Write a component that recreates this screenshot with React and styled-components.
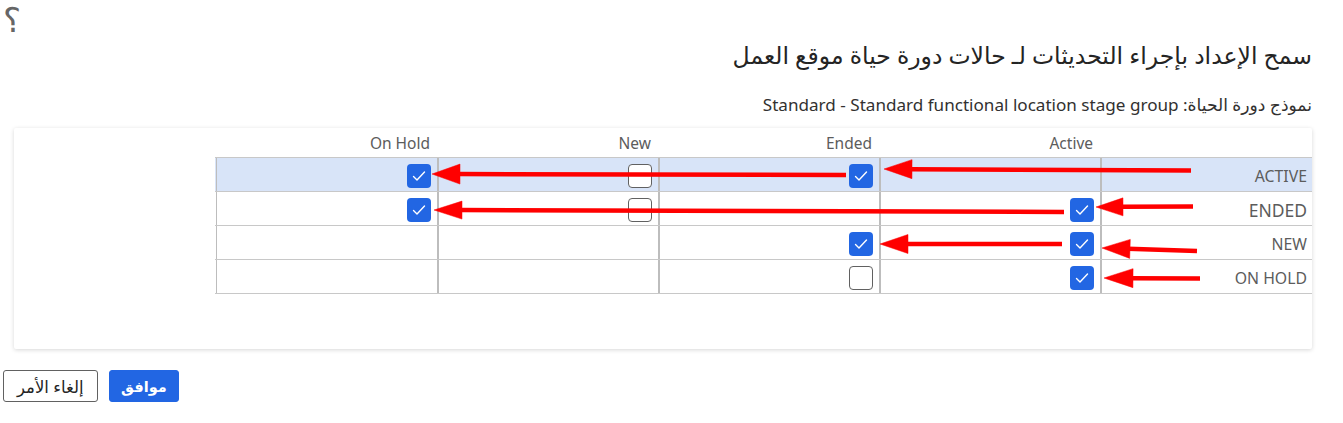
import React from 'react';
import styled, { createGlobalStyle } from 'styled-components';

const GlobalStyle = createGlobalStyle`
  html, body {
    margin: 0;
    padding: 0;
    background: #ffffff;
  }
  body {
    font-family: "Noto Sans", "DejaVu Sans", sans-serif;
    color: #242424;
  }
`;

const Page = styled.div`
  direction: rtl;
  width: 1343px;
  box-sizing: border-box;
  padding: 0 31px 0 3px;
`;

const Help = styled.div`
  height: 36px;
  text-align: left;
  font-family: "DejaVu Sans", sans-serif;
  font-size: 34px;
  line-height: 40px;
  color: #666;
  font-weight: 200;
  overflow: visible;
`;

const Title = styled.h1`
  margin: 4px 0 0;
  font-size: 23.5px;
  line-height: 30px;
  font-weight: 400;
  color: #242424;
`;

const Subtitle = styled.p`
  margin: 24px 0 0;
  font-size: 17.1px;
  line-height: 22px;
  color: #323130;
`;

const Card = styled.div`
  position: relative;
  margin: 12px 0 0 11px;
  height: 221px;
  box-sizing: border-box;
  background: #fff;
  box-shadow: 0 1px 4px rgba(0, 0, 0, 0.16);
  border-radius: 2px;
`;

const Table = styled.div`
  width: 1097px;
`;

const Row = styled.div`
  display: grid;
  grid-template-columns: 212px repeat(4, 221px);
  height: ${p => (p.$header ? '30px' : '34px')};
  box-sizing: border-box;
  border-bottom: 1px solid #c8c8c8;
  background: ${p => (p.$selected ? '#d8e4f8' : 'transparent')};
`;

const HeadCell = styled.div`
  display: flex;
  align-items: flex-end;
  padding: 0 7px 4px 0;
  font-size: 15.5px;
  line-height: 20px;
  color: #5c5c5c;
`;

const LabelCell = styled.div`
  display: flex;
  align-items: center;
  padding: 2px 5px 0 0;
  border-left: 2px solid #bdbdbd;
  font-size: ${p => (p.$big ? '17.5px' : '15.8px')};
  color: #5c5c5c;
`;

const CheckCell = styled.div`
  display: flex;
  align-items: center;
  box-sizing: border-box;
  padding: 2px 6px 0 0;
  border-left: ${p => (p.$last ? '1px' : '2px')} solid #bdbdbd;
`;

const Box = styled.span`
  display: inline-flex;
  align-items: center;
  justify-content: center;
  width: 24px;
  height: 24px;
  box-sizing: border-box;
  border-radius: 4px;
  background: ${p => (p.$checked ? '#2266e3' : '#ffffff')};
  border: ${p => (p.$checked ? 'none' : '1px solid #616161')};
`;

const Overlay = styled.svg`
  position: absolute;
  top: 0;
  left: 0;
  pointer-events: none;
`;

const Actions = styled.div`
  display: flex;
  justify-content: flex-end;
  gap: 11px;
  margin-top: 21px;
`;

const Button = styled.button`
  height: 32px;
  padding: ${p => (p.$primary ? '0 11.5px' : '0 13px')};
  box-sizing: border-box;
  border-radius: 3px;
  font-family: "Noto Sans", "DejaVu Sans", sans-serif;
  font-size: ${p => (p.$primary ? '14.5px' : '16.5px')};
  font-weight: ${p => (p.$primary ? 700 : 400)};
  color: ${p => (p.$primary ? '#ffffff' : '#242424')};
  background: ${p => (p.$primary ? '#2266e3' : '#ffffff')};
  border: 1px solid ${p => (p.$primary ? '#2266e3' : '#616161')};
`;

const Check = ({ checked }) => (
  <Box $checked={checked}>
    {checked && (
      <svg width="24" height="24" viewBox="0 0 24 24">
        <polyline points="6.5,12.5 10,16 17.5,8" fill="none" stroke="#fff" strokeWidth="1.4" strokeLinecap="round" strokeLinejoin="round" />
      </svg>
    )}
  </Box>
);

const Arrow = ({ x1, y1, x2, y2, len = 28, half = 9.5 }) => {
  const dx = x1 - x2;
  const dy = y1 - y2;
  const d = Math.hypot(dx, dy);
  const ux = dx / d;
  const uy = dy / d;
  const bx = x2 + ux * len;
  const by = y2 + uy * len;
  const px = -uy * half;
  const py = ux * half;
  return (
    <g fill="#ff0000" stroke="#ff0000">
      <line x1={x1} y1={y1} x2={bx - ux * 2} y2={by - uy * 2} strokeWidth="4.5" />
      <polygon points={`${x2},${y2} ${bx + px},${by + py} ${bx - px},${by - py}`} strokeWidth="0.5" />
    </g>
  );
};

// columns in reading order (right to left)
const columns = ['Active', 'Ended', 'New', 'On Hold'];

const rows = [
  { label: 'ACTIVE', checks: [null, true, false, true], selected: true },
  { label: 'ENDED', checks: [true, null, false, true], big: true },
  { label: 'NEW', checks: [true, true, null, null] },
  { label: 'ON HOLD', checks: [true, false, null, null] },
];

const arrows = [
  { x1: 1191, y1: 170.5, x2: 884, y2: 169 },
  { x1: 846, y1: 175, x2: 432, y2: 174, half: 10 },
  { x1: 1193, y1: 206.5, x2: 1096, y2: 207, len: 27, half: 9 },
  { x1: 1064, y1: 212, x2: 434, y2: 210, half: 9 },
  { x1: 1197, y1: 251, x2: 1102, y2: 248 },
  { x1: 1062, y1: 244, x2: 880, y2: 244 },
  { x1: 1200, y1: 278.5, x2: 1104, y2: 278, len: 29 },
];

export default function App() {
  return (
    <>
      <GlobalStyle />
      <Page>
        <Help>؟</Help>
        <Title>سمح الإعداد بإجراء التحديثات لـ حالات دورة حياة موقع العمل</Title>
        <Subtitle>نموذج دورة الحياة: Standard - Standard functional location stage group</Subtitle>
        <Card>
          <Table>
            <Row $header>
              <HeadCell />
              {columns.map(c => (
                <HeadCell key={c}>{c}</HeadCell>
              ))}
            </Row>
            {rows.map(r => (
              <Row key={r.label} $selected={r.selected}>
                <LabelCell $big={r.big}>{r.label}</LabelCell>
                {r.checks.map((c, i) => (
                  <CheckCell key={i} $last={i === 3}>
                    {c !== null && <Check checked={c} />}
                  </CheckCell>
                ))}
              </Row>
            ))}
          </Table>
          <Overlay width="1298" height="221" viewBox="14 128 1298 221">
            {arrows.map((a, i) => (
              <Arrow key={i} {...a} />
            ))}
          </Overlay>
        </Card>
        <Actions>
          <Button $primary>موافق</Button>
          <Button>إلغاء الأمر</Button>
        </Actions>
      </Page>
    </>
  );
}
